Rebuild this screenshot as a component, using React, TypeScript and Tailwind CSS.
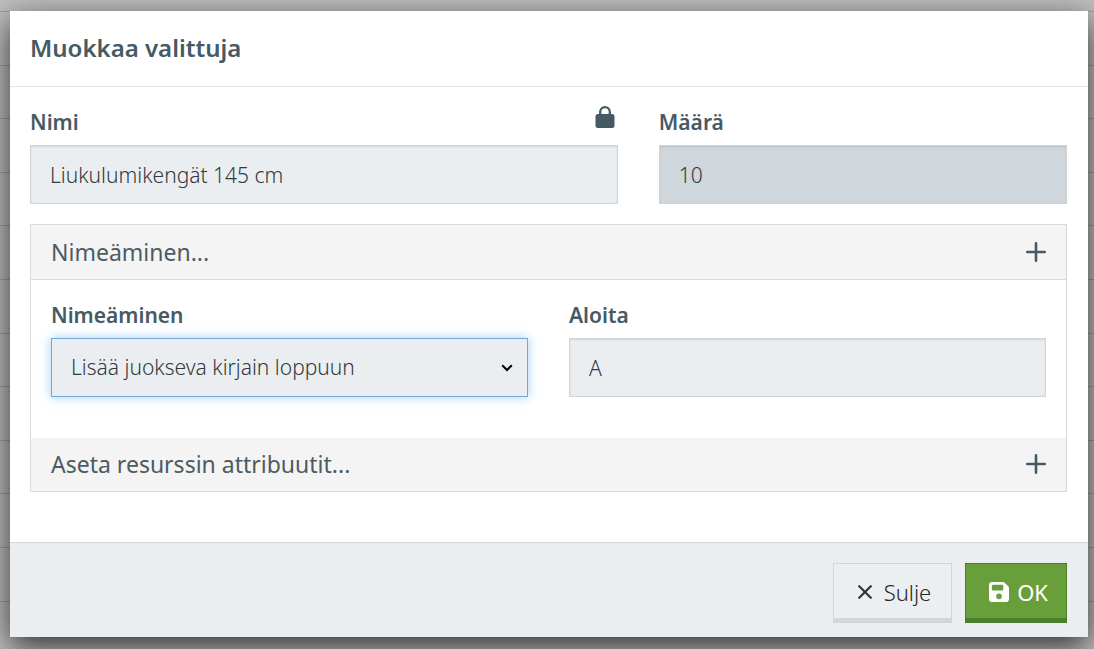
import { useState } from "react";
import type { ReactNode } from "react";

const labelClass = "text-[21px] leading-[30px] font-semibold text-[#465a63]";
const fieldClass =
  "h-[59px] w-full rounded-none border px-[19px] text-[21px] font-light text-[#33393c] outline-none";
const idleField =
  "border-[#cfd5d9] bg-[#eaeef1] shadow-[inset_0_1px_2px_rgba(0,0,0,0.1)]";

function PlusIcon() {
  return (
    <svg viewBox="0 0 20 20" className="size-5" fill="none" stroke="#465a63" strokeWidth="2.6" strokeLinecap="round" aria-hidden="true">
      <path d="M10 1.3v17.4M1.3 10h17.4" />
    </svg>
  );
}

function LockIcon() {
  return (
    <svg viewBox="0 0 20 22" className="h-[22px] w-5" fill="none" aria-hidden="true">
      <rect x="0.500" y="8" width="19" height="14" rx="2.500" fill="#465a63" />
      <path d="M5.200 9V6a4.800 4.800 0 0 1 9.600 0v3" stroke="#465a63" strokeWidth="2.300" />
    </svg>
  );
}

function CloseIcon() {
  return (
    <svg viewBox="0 0 14 14" className="size-[14px]" fill="none" stroke="#2f3437" strokeWidth="2.2" strokeLinecap="round" aria-hidden="true">
      <path d="M1.200 1.200l11.600 11.600M12.800 1.200L1.200 12.800" />
    </svg>
  );
}

function SaveIcon() {
  return (
    <svg viewBox="0 32 448 448" className="size-5" fill="#ffffff" aria-hidden="true">
      <path d="M64 32C28.700 32 0 60.700 0 96v320c0 35.300 28.700 64 64 64h320c35.300 0 64-28.700 64-64V173.300c0-17-6.700-33.300-18.700-45.300L352 50.700C340 38.700 323.700 32 306.700 32H64zm0 96c0-17.700 14.300-32 32-32h192c17.700 0 32 14.300 32 32v64c0 17.700-14.300 32-32 32H96c-17.700 0-32-14.300-32-32v-64zm160 160a64 64 0 1 1 0 128 64 64 0 1 1 0-128z" />
    </svg>
  );
}

function AccordionHeader({ children, className }: { children: ReactNode; className: string }) {
  return (
    <button
      type="button"
      className={`flex w-full items-center justify-between bg-[#f4f4f5] px-5 text-left text-[23px] text-[#4d5b62] ${className}`}
    >
      <span>{children}</span>
      <PlusIcon />
    </button>
  );
}

export default function App() {
  const [name, setName] = useState("Liukulumikengät 145 cm");
  const [start, setStart] = useState("A");

  return (
    <div className="min-h-screen bg-[#bfbfbf] bg-[repeating-linear-gradient(to_bottom,transparent_0px,transparent_11px,#a0a0a0_11px,#a0a0a0_12px,transparent_12px,transparent_53.6px)] pt-[11px] pr-[6px] pb-3 pl-[10px] font-['Noto_Sans',sans-serif]">
      <div role="dialog" aria-labelledby="title" className="bg-white shadow-[0_10px_30px_rgba(0,0,0,0.75)]">
        <header className="border-b border-[#e2e4e6] px-5 pt-[19px] pb-5">
          <h1 id="title" className="text-2xl leading-9 font-semibold text-[#465a63]">
            Muokkaa valittuja
          </h1>
        </header>

        <div className="pt-5 pb-[50px]">
          <div className="flex">
            <div className="w-7/12 pr-[21px] pl-5">
              <div className="flex justify-between pb-2">
                <label htmlFor="name" className={labelClass}>Nimi</label>
                <span className="-mt-px pr-[3px]"><LockIcon /></span>
              </div>
              <input id="name" value={name} onChange={(e) => setName(e.target.value)} className={`${fieldClass} ${idleField}`} />
            </div>
            <div className="w-5/12 pr-[21px] pl-5">
              <div className="flex pb-2">
                <label htmlFor="amount" className={labelClass}>Määrä</label>
              </div>
              <input id="amount" value="10" readOnly className={`${fieldClass} border-[#cbd3d6] bg-[#cfd7dd] shadow-[inset_0_1px_2px_rgba(0,0,0,0.1)]`} />
            </div>
          </div>

          <div className="mt-5 mr-[21px] ml-5 border border-[#d8dbdd]">
            <AccordionHeader className="h-[55px] border-b border-[#d8dbdd]">Nimeäminen...</AccordionHeader>
            <div className="grid grid-cols-2 gap-[41px] px-5 pt-5 pb-[41px]">
              <div className="flex flex-col gap-2">
                <label htmlFor="naming" className={labelClass}>Nimeäminen</label>
                <div className="relative">
                  <select id="naming" className={`${fieldClass} appearance-none border-[#73a7d5] bg-[#eaeef1] shadow-[0_0_10px_rgba(102,175,233,0.6)]`}>
                    <option>Lisää juokseva kirjain loppuun</option>
                  </select>
                  <svg viewBox="0 0 12 8" className="pointer-events-none absolute top-[26px] right-[15px] h-2 w-3" fill="none" stroke="#000000" strokeWidth="2" aria-hidden="true">
                    <path d="M1.200 1.200L6 6l4.800-4.800" />
                  </svg>
                </div>
              </div>
              <div className="flex flex-col gap-2">
                <label htmlFor="start" className={labelClass}>Aloita</label>
                <input id="start" value={start} onChange={(e) => setStart(e.target.value)} className={`${fieldClass} ${idleField}`} />
              </div>
            </div>
            <AccordionHeader className="h-[53px] pb-px">Aseta resurssin attribuutit...</AccordionHeader>
          </div>
        </div>

        <footer className="flex justify-end gap-[13px] border-t border-[#d3d7da] bg-[#eaeef1] pt-5 pr-[21px] pb-[14px]">
          <button type="button" className="flex h-[60px] items-center gap-3 border border-b-[5px] border-[#d0d7da] bg-[#ebeff2] pt-[2px] pr-5 pl-6 text-[22px] font-light text-[#1f2427]">
            <CloseIcon />
            Sulje
          </button>
          <button type="button" className="flex h-[60px] items-center gap-2 border border-b-[5px] border-[#4a7f2b] bg-[#699f3a] pt-[2px] pr-[18px] pl-[23px] text-[22px] text-white">
            <SaveIcon />
            OK
          </button>
        </footer>
      </div>
    </div>
  );
}
